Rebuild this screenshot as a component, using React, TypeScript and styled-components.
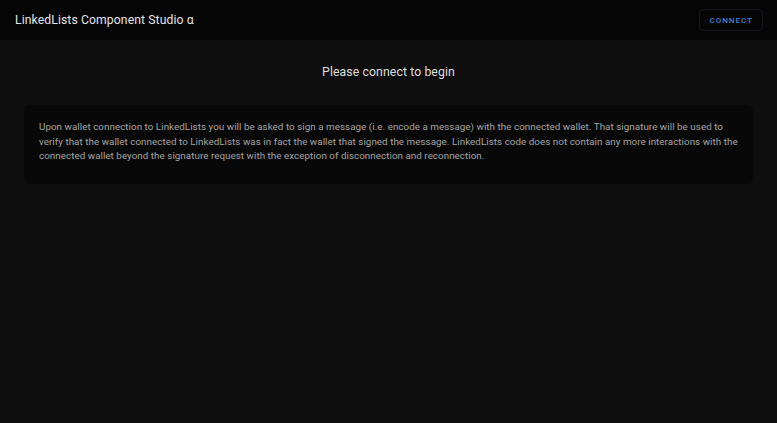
import React from "react";
import styled, { createGlobalStyle } from "styled-components";

const Global = createGlobalStyle`
  html, body { margin: 0; padding: 0; background: #0e0e0e; }
  body { font-family: Roboto, "Liberation Sans", sans-serif; }
  * { box-sizing: border-box; }
`;

const Page = styled.div`
  min-height: 423px;
  background: #0e0e0e;
  display: flex;
  flex-direction: column;
`;

const Header = styled.header`
  height: 40px;
  background: #050505;
  display: flex;
  align-items: center;
  justify-content: space-between;
  padding: 0 14px 0 15px;
`;

const Title = styled.h1`
  margin: 0;
  font-size: 12.2px;
  font-weight: 400;
  color: #e4e4e4;
  letter-spacing: 0.1px;
`;

const ConnectButton = styled.button`
  height: 22px;
  padding: 0 9px;
  background: transparent;
  border: 1px solid #15171f;
  border-radius: 4px;
  color: #4383d0;
  font-family: Roboto, "Liberation Sans", sans-serif;
  font-size: 8px;
  font-weight: 500;
  letter-spacing: 1px;
  text-transform: uppercase;
  cursor: pointer;
`;

const Main = styled.main`
  display: flex;
  flex-direction: column;
  align-items: stretch;
  padding: 25px 24px;
  gap: 26px;
`;

const Heading = styled.h2`
  margin: 0;
  text-align: center;
  font-size: 12.25px;
  font-weight: 400;
  color: #dedede;
  letter-spacing: 0.1px;
`;

const Card = styled.section`
  background: #080808;
  border-radius: 6px;
  padding: 15px 15px 20px;
`;

const Body = styled.p`
  margin: 0;
  font-size: 9.8px;
  line-height: 14.5px;
  color: #a4a4a4;
  letter-spacing: 0.05px;
`;

export default function App() {
  return (
    <>
      <Global />
      <Page>
        <Header>
          <Title>LinkedLists Component Studio α</Title>
          <ConnectButton>Connect</ConnectButton>
        </Header>
        <Main>
          <Heading>Please connect to begin</Heading>
          <Card>
            <Body>
              Upon wallet connection to LinkedLists you will be asked to sign a message (i.e. encode a message) with the
              connected wallet. That signature will be used to verify that the wallet connected to LinkedLists was in fact
              the wallet that signed the message. LinkedLists code does not contain any more interactions with the
              connected wallet beyond the signature request with the exception of disconnection and reconnection.
            </Body>
          </Card>
        </Main>
      </Page>
    </>
  );
}
